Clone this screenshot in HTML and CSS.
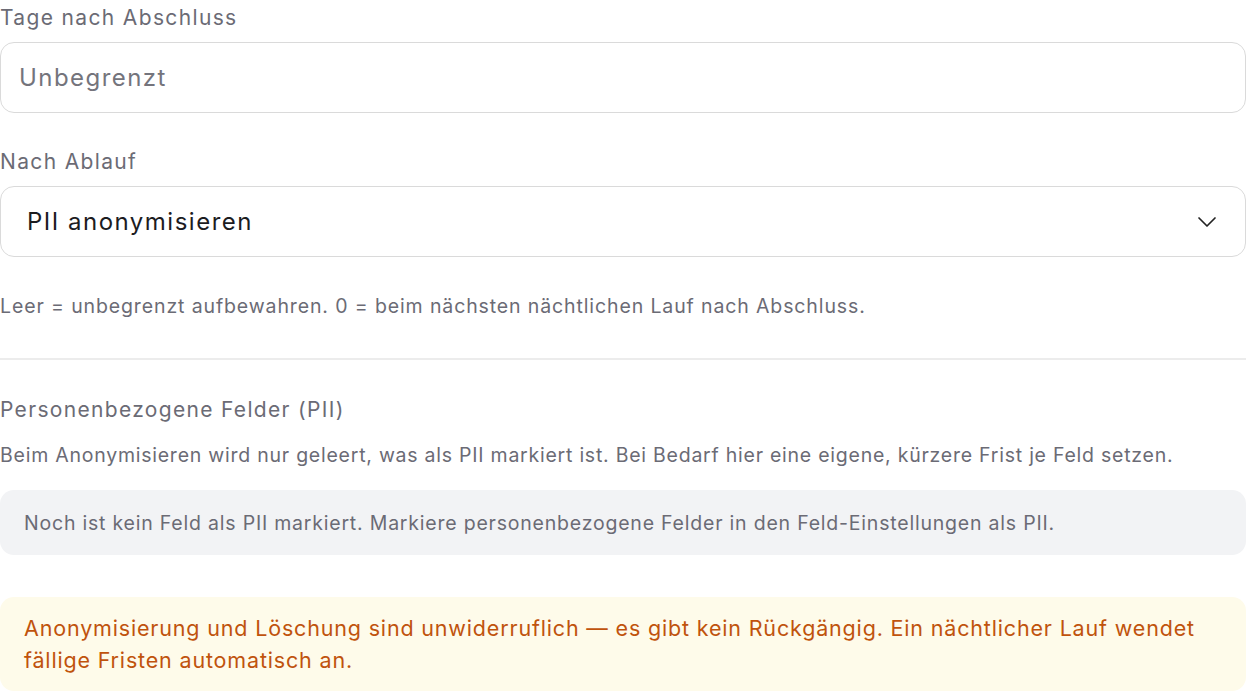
FILE: index.html
```html
<!DOCTYPE html>
<html lang="de">
<head>
<meta charset="utf-8">
<title>Aufbewahrung</title>
<link rel="stylesheet" href="styles.css">
</head>
<body>
<div class="page">
  <div class="field">
    <label class="label">Tage nach Abschluss</label>
    <div class="control"><span class="placeholder">Unbegrenzt</span></div>
  </div>
  <div class="field field-next">
    <label class="label">Nach Ablauf</label>
    <div class="control select">
      <span class="value">PII anonymisieren</span>
      <svg class="chevron" width="20" height="12" viewBox="0 0 20 12" fill="none" stroke="#222" stroke-width="1.7" stroke-linecap="round" stroke-linejoin="round"><path d="M2 2l8 8 8-8"/></svg>
    </div>
  </div>
  <p class="help">Leer = unbegrenzt aufbewahren. 0 = beim nächsten nächtlichen Lauf nach Abschluss.</p>
  <hr class="divider">
  <h3 class="heading">Personenbezogene Felder (PII)</h3>
  <p class="desc">Beim Anonymisieren wird nur geleert, was als PII markiert ist. Bei Bedarf hier eine eigene, kürzere Frist je Feld setzen.</p>
  <div class="empty">Noch ist kein Feld als PII markiert. Markiere personenbezogene Felder in den Feld-Einstellungen als PII.</div>
  <div class="warning">Anonymisierung und Löschung sind unwiderruflich — es gibt kein Rückgängig. Ein nächtlicher Lauf wendet fällige Fristen automatisch an.</div>
</div>
</body>
</html>
```

FILE: styles.css
```css
html, body {
  margin: 0;
  padding: 0;
  background: #ffffff;
}
body {
  font-family: Inter, "Noto Sans", "Liberation Sans", sans-serif;
  color: #6b6b75;
}
.page {
  width: 1246px;
  padding-top: 3px;
}
.field {
  display: flex;
  flex-direction: column;
}
.field-next {
  margin-top: 34px;
}
.label {
  font-size: 21px;
  line-height: 30px;
  letter-spacing: 1.35px;
  margin-bottom: 9px;
  color: #6b6b75;
}
.control {
  box-sizing: border-box;
  height: 71px;
  border: 1.5px solid #dadada;
  border-radius: 14px;
  display: flex;
  align-items: center;
  padding: 0 18px;
  font-size: 24px;
}
.placeholder {
  color: #74747c;
  letter-spacing: 1.45px;
}
.select {
  padding: 0 28px 0 26px;
  justify-content: space-between;
}
.value {
  color: #1c1c1f;
  letter-spacing: 1.5px;
}
.chevron {
  display: block;
}
.help {
  margin: 35px 0 0;
  font-size: 19.5px;
  line-height: 28px;
  letter-spacing: 0.88px;
}
.divider {
  margin: 38px 0 0;
  border: 0;
  border-top: 2px solid #ececec;
}
.heading {
  margin: 35px 0 0;
  font-size: 21px;
  font-weight: 400;
  line-height: 30px;
  letter-spacing: 1.32px;
}
.desc {
  margin: 16px 0 0;
  font-size: 19.5px;
  line-height: 28px;
  letter-spacing: 0.76px;
}
.empty {
  margin-top: 21px;
  box-sizing: border-box;
  height: 65px;
  display: flex;
  align-items: center;
  padding: 0 24px;
  background: #f2f3f5;
  border-radius: 14px;
  font-size: 19.5px;
  letter-spacing: 0.79px;
  color: #6b6b75;
}
.warning {
  margin-top: 42px;
  padding: 15px 24px;
  background: #fefbea;
  border-radius: 14px;
  font-size: 21.5px;
  line-height: 32px;
  letter-spacing: 0.83px;
  color: #c0530d;
}
```
